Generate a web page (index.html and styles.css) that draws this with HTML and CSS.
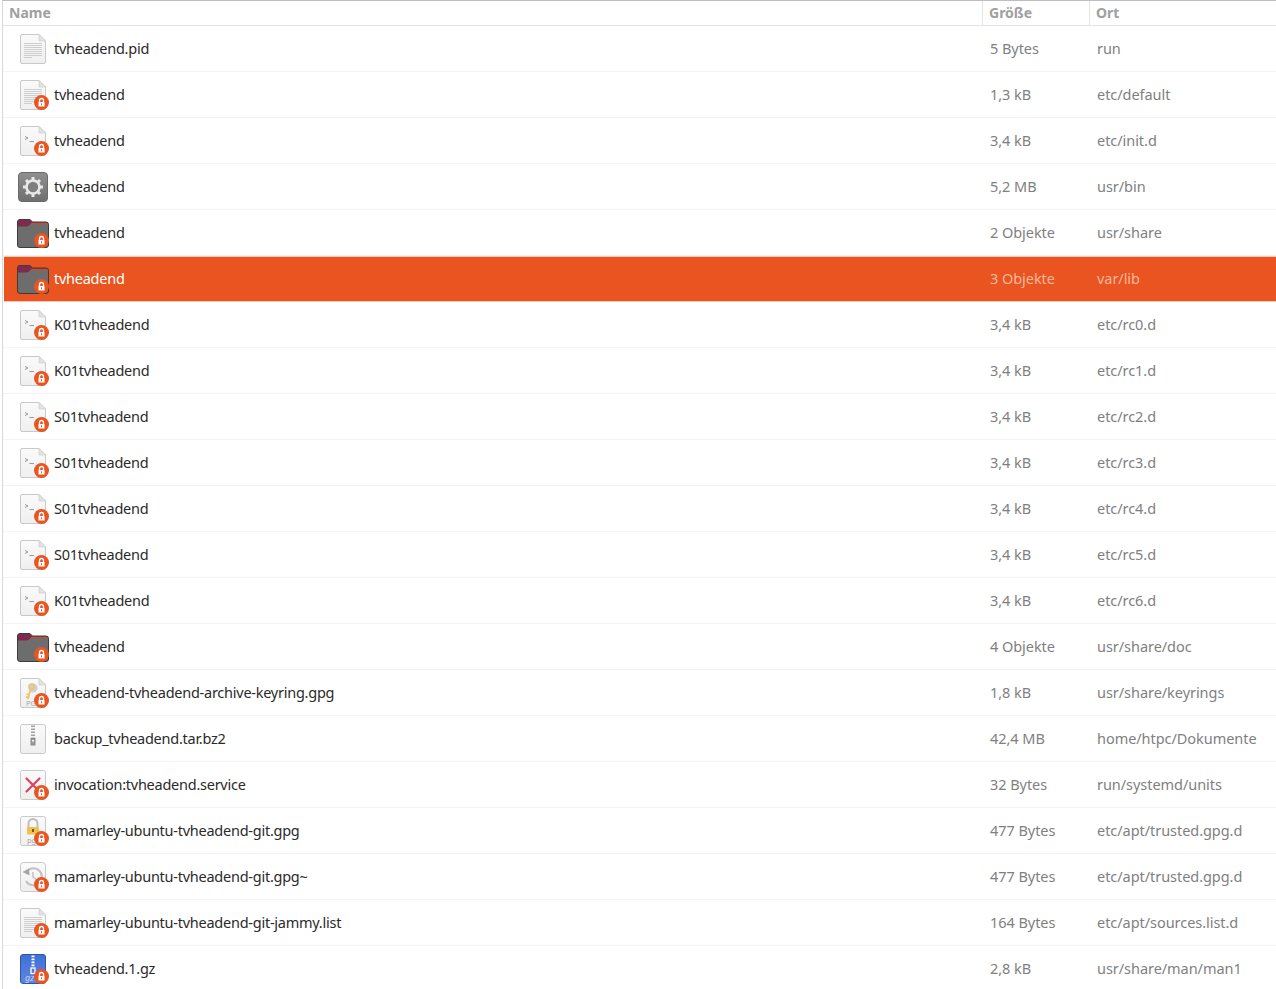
FILE: index.html
```html
<!DOCTYPE html>
<html lang="de">
<head>
<meta charset="utf-8">
<title>Dateien</title>
<link rel="stylesheet" href="styles.css">
</head>
<body>
<svg class="defs" width="0" height="0">
<defs>
<linearGradient id="paper" x1="0" y1="0" x2="0" y2="1"><stop offset="0" stop-color="#fafafa"/><stop offset="1" stop-color="#efefef"/></linearGradient>
<linearGradient id="gearbg" x1="0" y1="0" x2="0" y2="1"><stop offset="0" stop-color="#8f8f8f"/><stop offset="1" stop-color="#6f6f6f"/></linearGradient>
<linearGradient id="bluebg" x1="0" y1="0" x2="0" y2="1"><stop offset="0" stop-color="#3f6fd8"/><stop offset="1" stop-color="#5f86de"/></linearGradient>
<symbol id="doc" viewBox="0 0 32 32"><path d="M5 1.500H22L28.500 8V29a1.500 1.500 0 0 1-1.500 1.500H5A1.500 1.500 0 0 1 3.500 29V3A1.500 1.500 0 0 1 5 1.500Z" fill="url(#paper)" stroke="#c9c9c9"/><path d="M22 1.500V8H28.500Z" fill="#e2e2e2" stroke="#cfcfcf" stroke-width=".7"/></symbol>
<symbol id="lines" viewBox="0 0 32 32"><path d="M7 10.500H25M7 12.500H25M7 14.500H25M7 16.500H25M7 18.500H25M7 20.500H25M7 22.500H25M7 24.500H15" stroke="#c4c4c4" stroke-width=".8" fill="none"/></symbol>
<symbol id="script" viewBox="0 0 32 32"><path d="M8 11.500L11 13L8 14.500" stroke="#9a9a9a" fill="none"/><path d="M12.500 16.500H17" stroke="#9a9a9a" fill="none"/></symbol>
<symbol id="gear" viewBox="0 0 32 32"><rect x="1.500" y="1.500" width="29" height="29" rx="3.500" fill="url(#gearbg)" stroke="#6a6a6a"/><g stroke="#e8e8e8" stroke-width="3"><path d="M16 6V26M6 16H26M9 9L23 23M23 9L9 23"/></g><circle cx="16" cy="16" r="7.800" fill="#e8e8e8"/><circle cx="16" cy="16" r="5.200" fill="#7f7f7f"/></symbol>
<symbol id="folder" viewBox="0 0 32 32"><path d="M.500 5A2.500 2.500 0 0 1 3 2.500H13L15.500 5H29A2.500 2.500 0 0 1 31.500 7.500V10H.500Z" fill="#7c2b4d"/><path d="M15 5.500H31V8.500H12Z" fill="#b2553f"/><path d="M.500 9.500H10L14 7.500H31.500V28A2.500 2.500 0 0 1 29 30.500H3A2.500 2.500 0 0 1 .500 28Z" fill="#6d6d6d"/><path d="M3 2.500H13L15.500 5H29A2.500 2.500 0 0 1 31.500 7.500V28A2.500 2.500 0 0 1 29 30.500H3A2.500 2.500 0 0 1 .500 28V5A2.500 2.500 0 0 1 3 2.500Z" fill="none" stroke="#3f3a3c"/></symbol>
<symbol id="key" viewBox="0 0 32 32"><circle cx="16" cy="11" r="4.500" fill="#cfcfcf"/><circle cx="14.500" cy="9.500" r="2.500" fill="none" stroke="#efc56a" stroke-width="1.600"/><path d="M13.500 12L11 22M12 18L9.500 17M11.500 20.500L9 20" stroke="#efc56a" stroke-width="1.800" fill="none"/><text class="tag" x="9" y="29">PGP</text></symbol>
<symbol id="zip" viewBox="0 0 32 32"><rect x="3.500" y="1.500" width="25" height="29" rx="2" fill="url(#paper)" stroke="#c9c9c9"/><path d="M16 2.500V15" stroke="#a2a2a2" stroke-width="4" stroke-dasharray="1.500 1.500"/><rect x="14" y="15.500" width="4" height="6.500" fill="#9a9a9a" stroke="#8a8a8a"/><rect x="15" y="17" width="2" height="1.500" fill="#f2f2f2"/></symbol>
<symbol id="cross" viewBox="0 0 32 32"><rect x="3.500" y="1.500" width="25" height="29" rx="2" fill="url(#paper)" stroke="#c9c9c9"/><path d="M9.500 9.500L22.500 22.500M22.500 9.500L9.500 22.500" stroke="#e0405f" stroke-width="2.200" stroke-linecap="round"/></symbol>
<symbol id="padlock" viewBox="0 0 32 32"><rect x="3.500" y="1.500" width="25" height="29" rx="2" fill="url(#paper)" stroke="#c9c9c9"/><path d="M11.500 12V8.500A4.500 4.500 0 0 1 20.500 8.500V12" stroke="#bdbdbd" stroke-width="2" fill="none"/><rect x="10" y="12" width="12" height="7.500" rx="1" fill="#efc14f"/><rect x="15" y="14" width="2" height="3" fill="#6a5a2a"/><text class="tag" x="10" y="28">pgp</text></symbol>
<symbol id="revert" viewBox="0 0 32 32"><rect x="3.500" y="1.500" width="25" height="29" rx="3" fill="url(#paper)" stroke="#c9c9c9"/><path d="M10 10A8.500 8.500 0 1 1 9 20" stroke="#c2c2c2" stroke-width="2" fill="none"/><path d="M5.500 11L12 7.500L12.500 14.500Z" fill="#a5a5a5"/><path d="M16 11V16L19 18" stroke="#c2c2c2" stroke-width="1.500" fill="none"/></symbol>
<symbol id="gz" viewBox="0 0 32 32"><rect x="3.500" y="1.500" width="25" height="29" rx="2.500" fill="url(#bluebg)" stroke="#2f55a8"/><path d="M16 2.500V14" stroke="#fff" stroke-width="3" stroke-dasharray="1.800 1.200"/><rect x="14" y="15" width="4" height="5.500" fill="none" stroke="#fff" stroke-width="1.300"/><text class="tag tag-gz" x="8" y="28">gz</text></symbol>
<symbol id="emblem" viewBox="0 0 32 32"><circle cx="24.500" cy="23.500" r="7.500" fill="#e95420"/><path d="M22.500 23V21.500A2 2 0 0 1 26.500 21.500V23" stroke="#fff" stroke-width="1.300" fill="none"/><rect x="21.500" y="23" width="6" height="4.500" fill="#fff"/><rect x="24" y="24.300" width="1" height="2" fill="#e95420"/></symbol>
</defs>
</svg>
<main class="list">
<header class="row head"><div class="c-name">Name</div><div class="c-size">Größe</div><div class="c-place">Ort</div></header>
<div class="row"><div class="c-name"><svg class="icon"><use href="#doc"/><use href="#lines"/></svg>tvheadend.pid</div><div class="c-size">5 Bytes</div><div class="c-place">run</div></div>
<div class="row"><div class="c-name"><svg class="icon"><use href="#doc"/><use href="#lines"/><use href="#emblem"/></svg>tvheadend</div><div class="c-size">1,3 kB</div><div class="c-place">etc/default</div></div>
<div class="row"><div class="c-name"><svg class="icon"><use href="#doc"/><use href="#script"/><use href="#emblem"/></svg>tvheadend</div><div class="c-size">3,4 kB</div><div class="c-place">etc/init.d</div></div>
<div class="row"><div class="c-name"><svg class="icon"><use href="#gear"/></svg>tvheadend</div><div class="c-size">5,2 MB</div><div class="c-place">usr/bin</div></div>
<div class="row"><div class="c-name"><svg class="icon"><use href="#folder"/><use href="#emblem"/></svg>tvheadend</div><div class="c-size">2 Objekte</div><div class="c-place">usr/share</div></div>
<div class="row selected"><div class="c-name"><svg class="icon"><use href="#folder"/><use href="#emblem"/></svg>tvheadend</div><div class="c-size">3 Objekte</div><div class="c-place">var/lib</div></div>
<div class="row"><div class="c-name"><svg class="icon"><use href="#doc"/><use href="#script"/><use href="#emblem"/></svg>K01tvheadend</div><div class="c-size">3,4 kB</div><div class="c-place">etc/rc0.d</div></div>
<div class="row"><div class="c-name"><svg class="icon"><use href="#doc"/><use href="#script"/><use href="#emblem"/></svg>K01tvheadend</div><div class="c-size">3,4 kB</div><div class="c-place">etc/rc1.d</div></div>
<div class="row"><div class="c-name"><svg class="icon"><use href="#doc"/><use href="#script"/><use href="#emblem"/></svg>S01tvheadend</div><div class="c-size">3,4 kB</div><div class="c-place">etc/rc2.d</div></div>
<div class="row"><div class="c-name"><svg class="icon"><use href="#doc"/><use href="#script"/><use href="#emblem"/></svg>S01tvheadend</div><div class="c-size">3,4 kB</div><div class="c-place">etc/rc3.d</div></div>
<div class="row"><div class="c-name"><svg class="icon"><use href="#doc"/><use href="#script"/><use href="#emblem"/></svg>S01tvheadend</div><div class="c-size">3,4 kB</div><div class="c-place">etc/rc4.d</div></div>
<div class="row"><div class="c-name"><svg class="icon"><use href="#doc"/><use href="#script"/><use href="#emblem"/></svg>S01tvheadend</div><div class="c-size">3,4 kB</div><div class="c-place">etc/rc5.d</div></div>
<div class="row"><div class="c-name"><svg class="icon"><use href="#doc"/><use href="#script"/><use href="#emblem"/></svg>K01tvheadend</div><div class="c-size">3,4 kB</div><div class="c-place">etc/rc6.d</div></div>
<div class="row"><div class="c-name"><svg class="icon"><use href="#folder"/><use href="#emblem"/></svg>tvheadend</div><div class="c-size">4 Objekte</div><div class="c-place">usr/share/doc</div></div>
<div class="row"><div class="c-name"><svg class="icon"><use href="#doc"/><use href="#key"/><use href="#emblem"/></svg>tvheadend-tvheadend-archive-keyring.gpg</div><div class="c-size">1,8 kB</div><div class="c-place">usr/share/keyrings</div></div>
<div class="row"><div class="c-name"><svg class="icon"><use href="#zip"/></svg>backup_tvheadend.tar.bz2</div><div class="c-size">42,4 MB</div><div class="c-place">home/htpc/Dokumente</div></div>
<div class="row"><div class="c-name"><svg class="icon"><use href="#cross"/><use href="#emblem"/></svg>invocation:tvheadend.service</div><div class="c-size">32 Bytes</div><div class="c-place">run/systemd/units</div></div>
<div class="row"><div class="c-name"><svg class="icon"><use href="#padlock"/><use href="#emblem"/></svg>mamarley-ubuntu-tvheadend-git.gpg</div><div class="c-size">477 Bytes</div><div class="c-place">etc/apt/trusted.gpg.d</div></div>
<div class="row"><div class="c-name"><svg class="icon"><use href="#revert"/><use href="#emblem"/></svg>mamarley-ubuntu-tvheadend-git.gpg~</div><div class="c-size">477 Bytes</div><div class="c-place">etc/apt/trusted.gpg.d</div></div>
<div class="row"><div class="c-name"><svg class="icon"><use href="#doc"/><use href="#lines"/><use href="#emblem"/></svg>mamarley-ubuntu-tvheadend-git-jammy.list</div><div class="c-size">164 Bytes</div><div class="c-place">etc/apt/sources.list.d</div></div>
<div class="row"><div class="c-name"><svg class="icon"><use href="#gz"/><use href="#emblem"/></svg>tvheadend.1.gz</div><div class="c-size">2,8 kB</div><div class="c-place">usr/share/man/man1</div></div>
</main>
</body>
</html>
```
FILE: styles.css
```css
html, body {
  margin: 0;
  padding: 0;
  height: 989px;
  overflow: hidden;
  background: #fff;
}
.defs {
  position: absolute;
}
.list {
  margin-left: 2px;
  height: 989px;
  overflow: hidden;
  border-left: 1px solid #d8d8d8;
  border-top: 1px solid #bdbdbd;
  box-sizing: border-box;
  font-family: "Noto Sans", "Open Sans", sans-serif;
  font-size: 14.5px;
  color: #2a2a2a;
}
.row {
  display: grid;
  grid-template-columns: 979px 107px 1fr;
  height: 46px;
  box-sizing: border-box;
  border-bottom: 1px solid #f3f3f3;
  padding-left: 1px;
}
.row > div {
  display: flex;
  align-items: center;
  white-space: nowrap;
  padding-bottom: 1px;
}
.c-name {
  padding-left: 13px;
  gap: 5px;
  letter-spacing: -0.25px;
}
.c-size,
.c-place {
  padding-left: 7px;
  color: #7f7f7f;
  letter-spacing: -0.05px;
}
.icon {
  width: 32px;
  height: 32px;
  flex: none;
  margin-top: 2px;
}
.tag {
  font-family: "Noto Sans", sans-serif;
  font-size: 7.5px;
  letter-spacing: 0;
  fill: #a8a8a8;
}
.tag-gz {
  font-style: italic;
  font-size: 9px;
  fill: #c5d3f2;
}
.head {
  height: 25px;
  border-bottom: 1px solid #e3e3e3;
  font-weight: 700;
  font-size: 14px;
  color: #a0a0a0;
}
.head > div {
  padding-bottom: 2px;
  color: #a0a0a0;
  letter-spacing: 0;
}
.head .c-name {
  padding-left: 5px;
  border-right: 1px solid #e3e3e3;
}
.head .c-size {
  padding-left: 6px;
  border-right: 1px solid #e3e3e3;
}
.head .c-place {
  padding-left: 6px;
}
.selected {
  background: #e95420;
  color: #fff;
  border-bottom-color: #f3c9b8;
  box-shadow: inset 0 1px 0 #f3c9b8;
  margin-left: 1px;
  padding-left: 0;
}
.selected .c-size,
.selected .c-place {
  color: #f7b79d;
}
```
